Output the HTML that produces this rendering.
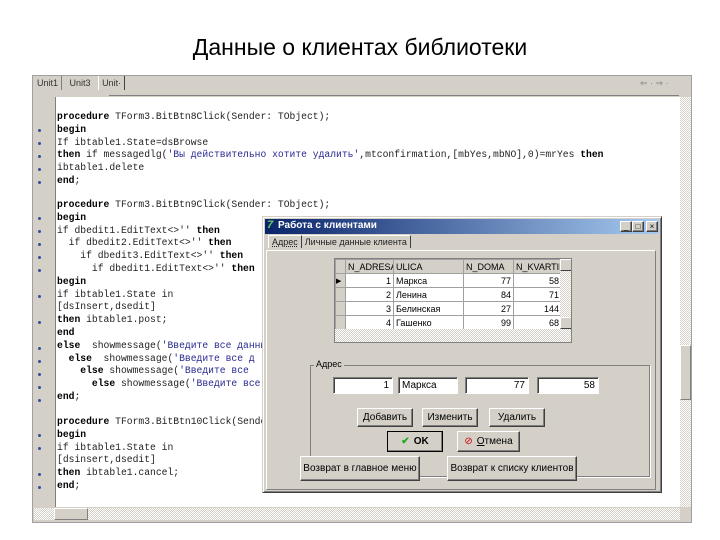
<!DOCTYPE html>
<html><head><meta charset="utf-8"><style>
*{margin:0;padding:0;box-sizing:border-box}
body{width:720px;height:540px;background:#fff;position:relative;overflow:hidden;font-family:"Liberation Sans",sans-serif}
.a{position:absolute}
h1{position:absolute;left:0;width:720px;top:34px;text-align:center;font-weight:normal;font-size:23px;color:#000}
.code{font-family:"Liberation Mono",monospace;font-size:9.7px;color:#222;white-space:pre;line-height:12.8px}
.code b{color:#000}
.s{color:#2a2a90}
.dot{position:absolute;left:38px;width:3px;height:3px;background:#3050a0;border-radius:50%}
.g{background:#d4d0c8}
.btn{position:absolute;background:#d4d0c8;border:1px solid;border-color:#fff #404040 #404040 #fff;box-shadow:inset -1px -1px #808080;font-size:10px;display:flex;align-items:center;justify-content:center;color:#000}
.ed{position:absolute;background:#fff;border:1px solid;border-color:#808080 #fff #fff #808080;box-shadow:inset 1px 1px #404040;font-size:10px;padding:2px 3px;height:17px}
.chk{background-image:repeating-conic-gradient(#d4d0c8 0 25%,#fff 0 50%);background-size:2px 2px}
table{border-collapse:collapse;font-size:9px;table-layout:fixed;width:226px}
td{border:1px solid #a0a0a0;height:14px;padding:0 2px;background:#fff;white-space:nowrap;overflow:hidden}
</style></head><body>
<h1>Данные о клиентах библиотеки</h1>
<div class="a g" style="left:32px;top:75px;width:660px;height:448px;border:1px solid #a0a0a0"></div>
<div class="a" style="left:34px;top:78px;font-size:9px;color:#333">
<span style="padding:2px 3px;border-right:1px solid #808080">Unit1</span>
<span style="padding:2px 5px;background:#d4d0c8">Unit3</span>
<span style="padding:2px 3px;border-left:1px solid #fff;border-right:1px solid #404040">Unit·</span></div>
<div class="a" style="left:109px;top:95px;width:570px;height:1px;background:#808080"></div>
<div class="a" style="left:640px;top:78px;font-size:9px;color:#888">⇐ · ⇒ ·</div>
<div class="a" style="left:55px;top:97px;width:625px;height:410px;background:#fff;border-left:1px solid #808080"></div>
<div class="a chk" style="left:680px;top:97px;width:11px;height:410px"></div>
<div class="a g" style="left:680px;top:345px;width:11px;height:55px;border:1px solid #fff;border-right-color:#808080;border-bottom-color:#808080"></div>
<div class="a chk" style="left:34px;top:508px;width:646px;height:12px"></div>
<div class="a g" style="left:54px;top:508px;width:34px;height:12px;border:1px solid #fff;border-right-color:#808080;border-bottom-color:#808080"></div>
<div class="a code" style="left:57px;top:111px"><b>procedure</b> TForm3.BitBtn8Click(Sender: TObject);
<b>begin</b>
If ibtable1.State=dsBrowse
<b>then</b> if messagedlg(<span class="s">'Вы действительно хотите удалить'</span>,mtconfirmation,[mbYes,mbNO],0)=mrYes <b>then</b>
ibtable1.delete
<b>end</b>;</div>
<div class="a code" style="left:57px;top:199px"><b>procedure</b> TForm3.BitBtn9Click(Sender: TObject);
<b>begin</b>
if dbedit1.EditText&lt;&gt;'' <b>then</b>
  if dbedit2.EditText&lt;&gt;'' <b>then</b>
    if dbedit3.EditText&lt;&gt;'' <b>then</b>
      if dbedit1.EditText&lt;&gt;'' <b>then</b>
<b>begin</b>
if ibtable1.State in
[dsInsert,dsedit]
<b>then</b> ibtable1.post;
<b>end</b>
<b>else</b>  showmessage(<span class="s">'Введите все данные'</span>)
  <b>else</b>  showmessage(<span class="s">'Введите все д</span>
    <b>else</b> showmessage(<span class="s">'Введите все</span>
      <b>else</b> showmessage(<span class="s">'Введите все</span>
<b>end</b>;</div>
<div class="a code" style="left:57px;top:416px"><b>procedure</b> TForm3.BitBtn10Click(Sender
<b>begin</b>
if ibtable1.State in
[dsinsert,dsedit]
<b>then</b> ibtable1.cancel;
<b>end</b>;</div>
<div class="dot" style="top:129px"></div><div class="dot" style="top:142px"></div><div class="dot" style="top:155px"></div><div class="dot" style="top:168px"></div><div class="dot" style="top:181px"></div>
<div class="dot" style="top:217px"></div><div class="dot" style="top:230px"></div><div class="dot" style="top:243px"></div><div class="dot" style="top:256px"></div><div class="dot" style="top:269px"></div><div class="dot" style="top:295px"></div><div class="dot" style="top:321px"></div><div class="dot" style="top:347px"></div><div class="dot" style="top:360px"></div><div class="dot" style="top:373px"></div><div class="dot" style="top:386px"></div><div class="dot" style="top:399px"></div>
<div class="dot" style="top:434px"></div><div class="dot" style="top:447px"></div><div class="dot" style="top:473px"></div><div class="dot" style="top:486px"></div>

<!-- window -->
<div class="a g" style="left:262px;top:216px;width:400px;height:277px;border:1px solid;border-color:#d4d0c8 #404040 #404040 #d4d0c8;box-shadow:inset 1px 1px #fff,inset -1px -1px #808080"></div>
<div class="a" style="left:265px;top:219px;width:394px;height:15px;background:linear-gradient(90deg,#0a246a,#a6caf0)"></div>
<div class="a" style="left:267px;top:219px;font-size:11px;font-weight:bold;color:#6c6;font-style:italic">7</div>
<div class="a" style="left:278px;top:220px;font-size:10px;font-weight:bold;color:#fff">Работа с клиентами</div>
<div class="btn" style="left:620px;top:221px;width:12px;height:11px;font-size:8px">_</div>
<div class="btn" style="left:632px;top:221px;width:12px;height:11px;font-size:8px">□</div>
<div class="btn" style="left:646px;top:221px;width:12px;height:11px;font-size:8px">×</div>
<div class="a" style="left:268px;top:237px;font-size:9px;color:#222"><span style="padding:1px 3px;border:1px solid #fff;border-bottom:none;border-right-color:#404040;text-decoration:underline dotted">Адрес</span><span style="padding:1px 3px;border-right:1px solid #404040;border-top:1px solid #fff">Личные данные клиента</span></div>
<div class="a" style="left:266px;top:250px;width:390px;height:240px;border:1px solid;border-color:#fff #808080 #808080 #fff"></div>
<!-- grid -->
<div class="a" style="left:334px;top:258px;width:238px;height:85px;background:#fff;border:1px solid #808080;overflow:hidden">
<table style="position:absolute;left:0;top:0">
<colgroup><col style="width:10px"><col style="width:48px"><col style="width:70px"><col style="width:50px"><col style="width:48px"></colgroup>
<tr><td style="background:#d4d0c8"></td><td style="background:#d4d0c8">N_ADRESA</td><td style="background:#d4d0c8">ULICA</td><td style="background:#d4d0c8">N_DOMA</td><td style="background:#d4d0c8">N_KVARTIR</td></tr>
<tr><td style="background:#d4d0c8;font-size:7px;padding:0">▶</td><td align="right">1</td><td>Маркса</td><td align="right">77</td><td align="right">58</td></tr>
<tr><td style="background:#d4d0c8"></td><td align="right">2</td><td>Ленина</td><td align="right">84</td><td align="right">71</td></tr>
<tr><td style="background:#d4d0c8"></td><td align="right">3</td><td>Белинская</td><td align="right">27</td><td align="right">144</td></tr>
<tr><td style="background:#d4d0c8"></td><td align="right">4</td><td>Гашенко</td><td align="right">99</td><td align="right">68</td></tr>
</table>
<div class="a chk" style="left:225px;top:0;width:12px;height:70px"></div>
<div class="a g" style="left:225px;top:0;width:12px;height:12px;border:1px solid #fff;border-right-color:#404040;border-bottom-color:#404040"></div>
<div class="a g" style="left:225px;top:58px;width:12px;height:12px;border:1px solid #fff;border-right-color:#404040;border-bottom-color:#404040"></div>
<div class="a chk" style="left:0;top:70px;width:237px;height:14px"></div>
</div>
<!-- group -->
<div class="a" style="left:310px;top:365px;width:340px;height:112px;border:1px solid #808080;box-shadow:1px 1px #fff"></div>
<div class="a g" style="left:314px;top:359px;font-size:9px;padding:0 2px">Адрес</div>
<div class="ed" style="left:333px;top:377px;width:60px;text-align:right">1</div>
<div class="ed" style="left:398px;top:377px;width:60px">Маркса</div>
<div class="ed" style="left:465px;top:377px;width:64px;text-align:right">77</div>
<div class="ed" style="left:537px;top:377px;width:62px;text-align:right">58</div>
<div class="btn" style="left:357px;top:408px;width:56px;height:19px">Добавить</div>
<div class="btn" style="left:422px;top:408px;width:56px;height:19px">Изменить</div>
<div class="btn" style="left:489px;top:408px;width:56px;height:19px">Удалить</div>
<div class="btn" style="left:387px;top:431px;width:56px;height:21px;border:1px solid #000;font-weight:bold"><span style="color:#2a2;margin-right:4px">✔</span>OK</div>
<div class="btn" style="left:457px;top:431px;width:63px;height:21px"><span style="color:#c00;margin-right:4px">⊘</span><u>О</u>тмена</div>
<div class="btn" style="left:300px;top:456px;width:120px;height:25px">Возврат в главное меню</div>
<div class="btn" style="left:447px;top:456px;width:130px;height:25px">Возврат к списку клиентов</div>
</body></html>
